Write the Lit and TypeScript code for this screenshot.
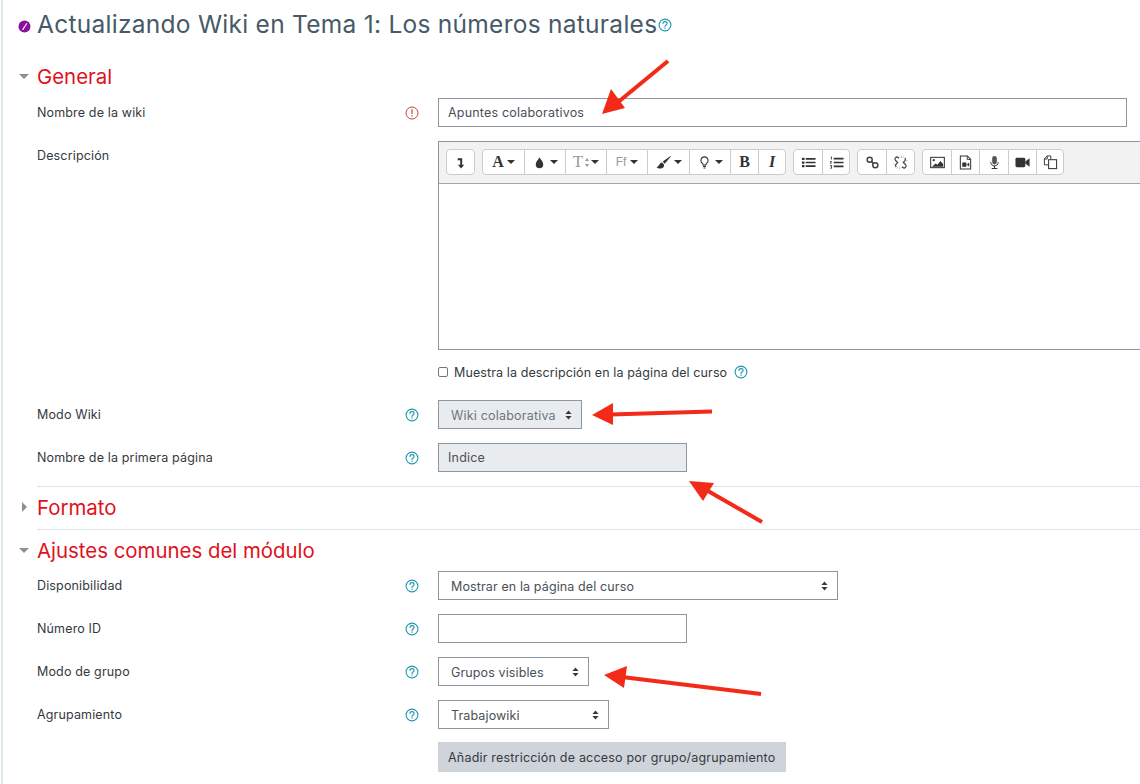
import { LitElement, html, css, svg } from "lit";
import { customElement } from "lit/decorators.js";

const caret = html`<span class="caret"></span>`;
const ic = (body: unknown, vb = "0 0 16 16") => html`<svg class="ti" viewBox=${vb} width="16" height="16">${body}</svg>`;

const help = html`<svg class="help" width="14" height="14" viewBox="0 0 14 14" fill="none" stroke="#1f97ad" stroke-width="1.1"><circle cx="7" cy="7" r="5.9"/><path d="M5 5.5c0-1.2.9-1.9 2-1.9s2.1.7 2.1 1.8c0 1.6-2.1 1.6-2.1 3" stroke-linecap="round"/><path d="M7 9.6v1.1" stroke-width="1.2"/></svg>`;
const err = html`<svg class="help" width="14" height="14" viewBox="0 0 14 14" fill="none" stroke="#c8432f" stroke-width="1"><circle cx="7" cy="7" r="6"/><path d="M7 3.2v4.8M7 9.2v1.3" stroke-width="1.2"/></svg>`;
const updown = html`<svg class="updown" width="7" height="10" viewBox="0 0 7 10" fill="#343a40"><path d="M3.5 0.5 6.6 4H.4zM3.5 9.5.4 6h6.2z"/></svg>`;
const tinyArrows = html`<svg width="4" height="9" viewBox="0 0 4 9" fill="#999"><path d="M2 0 4 3H0zM2 9 0 6h4z"/></svg>`;

const icons = {
  indent: ic(svg`<path d="M5 3.500h4.800v7H12L8.600 14.500 5.200 10.500h2.500V5.500H5z" fill="#333"/>`),
  drop: ic(svg`<path d="M8 2.500C9.500 5.500 12 7 12 10A4 4 0 0 1 4 10C4 7 6.500 5.500 8 2.500z" fill="#333"/>`),
  brush: ic(svg`<path d="M15.500 1 7.200 7 9.300 9.200 15.800 1.500zM6.500 8C3.500 8 4 12 .5 13 3.500 15.500 9.500 14.500 8.500 10z" fill="#333"/>`),
  bulb: ic(svg`<path d="M8 2a3.800 3.800 0 0 0-2.200 6.900c.6.5.7 1 .7 1.800h3c0-.8.100-1.300.7-1.800A3.800 3.800 0 0 0 8 2z" fill="none" stroke="#333" stroke-width="1.100"/><path d="M6.500 11.500h3v1.300h-3zM7 13.400h2v1H7z" fill="#333"/>`),
  ul: ic(svg`<path d="M1 3h2.700v2.400H1zM1 6.800h2.700v2.400H1zM1 10.600h2.700v2.400H1zM5 3.300h10.500v1.800H5zM5 7.100h10.500v1.800H5zM5 10.900h10.500v1.800H5z" fill="#333"/>`),
  ol: ic(svg`<path d="M2 1.500h1v3.200H2zM1 6.500h2v.7L1.800 8.400h1.300v.7H.9v-.7l1.200-1.200H1zM1 11h2.100v3.500H1v-.7h1.200v-.7h-.7v-.6h.7v-.8H1zM5 3h10.500v1.800H5zM5 7.100h10.500v1.800H5zM5 11.200h10.500v1.800H5z" fill="#333"/>`),
  link: ic(svg`<g fill="none" stroke="#444" stroke-width="1.600"><circle cx="5" cy="5" r="2.700"/><circle cx="11" cy="11" r="2.700"/><path d="M6.800 6.800l2.400 2.400"/></g>`),
  unlink: ic(svg`<g fill="none" stroke="#444" stroke-width="1.300"><path d="M6.500 3.500 5.500 2.700a2.100 2.100 0 0 0-3 2.900L5 8 3.200 10a2.100 2.100 0 0 0 .2 2.800"/><path d="M9.500 12.500l1 .8a2.100 2.100 0 0 0 3-2.900L11 8l1.800-2a2.100 2.100 0 0 0-.2-2.800"/></g><path d="M9 .8v2.200M14 6h1.500M.5 10H2M7 13v2.200M10.500 3l1-1.500M4 14.500l1-1.500" stroke="#aaa" stroke-width=".9"/>`),
  image: ic(svg`<rect x=".7" y="2.500" width="14.600" height="11" fill="none" stroke="#333" stroke-width="1.100"/><circle cx="4" cy="5.500" r="1.200" fill="#333"/><path d="M2 12.500 6 9l2 1.500L11 6.500l3 3v3z" fill="#333"/>`),
  media: ic(svg`<path d="M2.500 1h7.500l3.500 3.500v10.500H2.500z" fill="none" stroke="#333" stroke-width="1.100"/><path d="M9.800 1v3.700h3.700" fill="none" stroke="#333"/><path d="M4.500 8h4.500v4.500H4.500zM9.500 10.200 12 8v4.500z" fill="#333"/>`),
  mic: ic(svg`<rect x="5.500" y="1" width="5" height="9" rx="2.500" fill="#555"/><path d="M4 7.500c0 5.500 8 5.500 8 0" fill="none" stroke="#333" stroke-width="1"/><path d="M8 11.500v2.500M5 14.500h6" stroke="#333" stroke-width="1.100"/>`),
  video: ic(svg`<rect x=".5" y="3" width="10.500" height="10" rx="1.500" fill="#333"/><path d="M11 7 15.500 3.500v9L11 9z" fill="#333"/>`),
  copy: ic(svg`<path d="M1.500 4 4.500 1h3.800v3.500M1.500 4v6.500h4.300M1.500 4.300h3V1" fill="none" stroke="#333" stroke-width="1"/><rect x="6" y="5" width="8.500" height="9.500" fill="none" stroke="#333" stroke-width="1.100"/>`),
};

@customElement("app-root")
export class AppRoot extends LitElement {
  static styles = css`
    :host { display: block; height: 784px; overflow: hidden; background: #fff; font-family: "Inter", "Liberation Sans", sans-serif; font-size: 12.5px; color: #343a40; }
    .page { position: relative; height: 784px; margin-left: 1px; border-left: 2px solid #dee6ee; padding: 9px 0 0 34px; box-sizing: border-box; }
    .title { display: flex; align-items: center; height: 30px; margin: 0; font-size: 24.5px; font-weight: 400; color: #465a68; white-space: nowrap; letter-spacing: .27px; }
    .modicon { position: absolute; left: 15px; top: 20px; }
    .title svg { margin-top: 2px; margin-left: 1px; }
    h3 { margin: 0; height: 26px; display: flex; align-items: center; font-size: 20.4px; font-weight: 400; color: #e0101c; position: relative; white-space: nowrap; }
    .tri { position: absolute; left: -18px; top: 11px; width: 0; height: 0; border: 5px solid transparent; border-top: 5px solid #8f8f8f; border-bottom: 0; }
    .tri.right { left: -15px; top: 8px; border: 5px solid transparent; border-left: 5px solid #8f8f8f; border-right: 0; }
    .g1 { margin-top: 24px; }
    .row { display: grid; grid-template-columns: 368px 33px 1fr; align-items: center; margin-bottom: 14px; min-height: 29px; }
    .row > .ico { display: flex; }
    .label { white-space: nowrap; letter-spacing: .15px; }
    .ctl { box-sizing: border-box; height: 29px; border: 1px solid #8f959e; background: #fff; color: #495057; display: flex; align-items: center; justify-content: space-between; white-space: nowrap; }
    .input { padding-left: 9px; letter-spacing: .2px; }
    .select { padding: 0 9px 0 12px; letter-spacing: .12px; }
    .select span { padding-top: 1px; }
    .w-full { width: 689px; } .w-sm { width: 249px; }
    .off { background: #e9ecef; }
    .select.off { color: #6c757d; letter-spacing: .2px; }
    .editrow { display: grid; grid-template-columns: 401px 760px; margin-bottom: 0; }
    .editrow .label { padding-top: 7px; }
    .row.first { margin-top: 9px; }
    .editor { box-sizing: border-box; height: 209px; border: 1px solid #8f959e; width: 760px; margin-left: 0; }
    .bar { height: 42px; box-sizing: border-box; background: #f2f2f2; border-bottom: 1px solid #a5a5a5; padding: 7px 0 0 7px; display: flex; gap: 7px; }
    .group { display: flex; height: 26px; box-sizing: border-box; border: 1px solid #ccc; border-radius: 4px; background: #fff; }
    .btn { box-sizing: border-box; height: 24px; display: flex; align-items: center; justify-content: center; gap: 3px; border-left: 1px solid #ccc; font-family: "Liberation Serif", serif; font-size: 16px; color: #333; font-weight: 700; }
    .btn:first-child { border-left: 0; }
    .btn.light { color: #999; font-weight: 400; font-size: 17px; gap: 2px; }
    .btn.ff { font-family: "Liberation Sans", sans-serif; font-size: 12px; gap: 4px; }
    .btn.i { font-style: italic; }
    .caret { width: 0; height: 0; border: 4px solid transparent; border-top: 4px solid #333; border-bottom: 0; }
    .ti { width: 15px; height: 15px; }
    .check { display: flex; align-items: center; height: 20px; margin: 12px 0 18px 401px; white-space: nowrap; letter-spacing: .11px; }
    .box { box-sizing: border-box; width: 10px; height: 10px; border: 1px solid #767676; border-radius: 2px; background: #fff; margin-right: 6px; }
    .check svg { margin-left: 7px; }
    hr { margin: 0; border: 0; border-top: 1px solid #dee2e6; }
    .btn-main { display: flex; align-items: center; height: 30px; width: 348px; box-sizing: border-box; padding-left: 10px; background: #ced4da; color: #343a40; white-space: nowrap; margin-left: 401px; margin-top: -1px; letter-spacing: .2px; }
    .arrows { position: absolute; left: -3px; top: 0; pointer-events: none; }
    .hd-fmt { margin-top: 7px; margin-bottom: 9px; }
    .hd-aj { margin-top: 7px; margin-bottom: 8px; }
  `;

  row(label: string, icon: unknown, ctl: unknown) {
    return html`<div class="row"><div class="label">${label}</div><div class="ico">${icon}</div><div>${ctl}</div></div>`;
  }
  sel(text: string, width: number, off = false) {
    return html`<div class="ctl select ${off ? "off" : ""}" style="width:${width}px"><span>${text}</span>${updown}</div>`;
  }

  render() {
    const b = (w: number, c: unknown, cls = "") => html`<div class="btn ${cls}" style="width:${w}px">${c}</div>`;
    return html`<div class="page">
      <svg class="modicon" width="13" height="13" viewBox="0 0 13 13"><circle cx="6.500" cy="6.500" r="6" fill="#8a0f9e"/><path d="M4 9.500 8.500 3l.8.6L5.200 10z" fill="#fff"/></svg>
      <h2 class="title">Actualizando Wiki en Tema 1: Los números naturales${help}</h2>

      <h3 class="g1"><span class="tri"></span>General</h3>
      <div class="row first">
        <div class="label">Nombre de la wiki</div><div class="ico">${err}</div>
        <div class="ctl input w-full">Apuntes colaborativos</div>
      </div>
      <div class="editrow">
        <div class="label">Descripción</div>
        <div class="editor">
          <div class="bar">
            <div class="group">${b(27, icons.indent)}</div>
            <div class="group">
              ${b(41, html`A${caret}`)}${b(41, html`${icons.drop}${caret}`)}${b(41, html`T${tinyArrows}${caret}`, "light")}${b(41, html`Ff${caret}`, "light ff")}${b(42, html`${icons.brush}${caret}`)}${b(41, html`${icons.bulb}${caret}`)}${b(28, "B")}${b(27, "I", "i")}
            </div>
            <div class="group">${b(28, icons.ul)}${b(27, icons.ol)}</div>
            <div class="group">${b(28, icons.link)}${b(28, icons.unlink)}</div>
            <div class="group">${b(28, icons.image)}${b(28, icons.media)}${b(29, icons.mic)}${b(28, icons.video)}${b(27, icons.copy)}</div>
          </div>
        </div>
      </div>
      <div class="check"><span class="box"></span>Muestra la descripción en la página del curso${help}</div>
      ${this.row("Modo Wiki", help, this.sel("Wiki colaborativa", 144, true))}
      ${this.row("Nombre de la primera página", help, html`<div class="ctl input w-sm off">Indice</div>`)}
      <hr />
      <h3 class="hd-fmt"><span class="tri right"></span>Formato</h3>
      <hr />
      <h3 class="hd-aj"><span class="tri"></span>Ajustes comunes del módulo</h3>
      ${this.row("Disponibilidad", help, this.sel("Mostrar en la página del curso", 400))}
      ${this.row("Número ID", help, html`<div class="ctl input w-sm"></div>`)}
      ${this.row("Modo de grupo", help, this.sel("Grupos visibles", 151))}
      ${this.row("Agrupamiento", help, this.sel("Trabajowiki", 171))}
      <div class="btn-main">Añadir restricción de acceso por grupo/agrupamiento</div>

      <svg class="arrows" width="1140" height="784" fill="#f32a17" stroke="none">
        <path d="M668 61 617 103" stroke="#f32a17" stroke-width="4" />
        <polygon points="602,114 611,89 625,108" />
        <path d="M712 411.500 610 414.500" stroke="#f32a17" stroke-width="4" />
        <polygon points="592,415 613,403 613,425" />
        <path d="M762 522 708 491" stroke="#f32a17" stroke-width="4" />
        <polygon points="689,481 714,483 703,501" />
        <path d="M761 694 622 677" stroke="#f32a17" stroke-width="4" />
        <polygon points="604,675 627,666 624,688" />
      </svg>
    </div>`;
  }
}
